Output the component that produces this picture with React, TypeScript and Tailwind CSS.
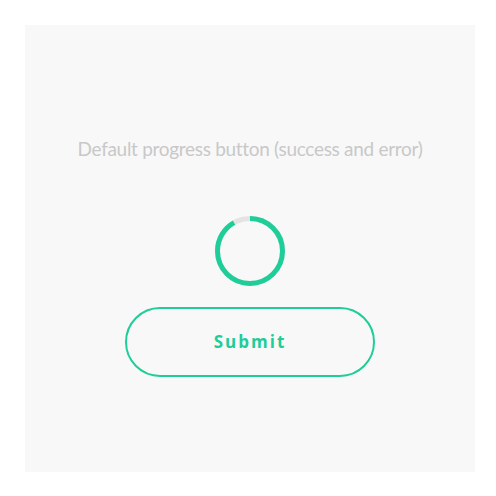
import React from 'react';

function Spinner() {
  // ring with a small grey gap just left of 12 o'clock
  const r = 32.5;
  const c = 2 * Math.PI * r;
  const gap = c * (30 / 360);
  return (
    <svg width="70" height="70" viewBox="0 0 70 70">
      <circle cx="35" cy="35" r={r} fill="none" stroke="#e3e3e3" strokeWidth="5" />
      <circle
        cx="35"
        cy="35"
        r={r}
        fill="none"
        stroke="#1ecd97"
        strokeWidth="5"
        strokeDasharray={`${c - gap} ${gap}`}
        transform="rotate(-90 35 35)"
      />
    </svg>
  );
}

export default function App() {
  return (
    <div className="w-[496px] h-[496px] bg-white pt-[25px] pl-[25px]">
      <div className="w-[450px] h-[447px] bg-[#f8f8f8] flex flex-col items-center pt-[112px]">
        <h2 className="text-[19px] leading-[24px] text-[#c8c8c8] font-['Lato','Liberation_Sans',sans-serif] tracking-[-0.3px]">
          Default progress button (success and error)
        </h2>
        <div className="mt-[55px]">
          <Spinner />
        </div>
        <button className="mt-[21px] w-[250px] h-[70px] rounded-full border-2 border-[#1ecd97] bg-transparent text-[#1ecd97] text-[17px] font-bold tracking-[2px] font-['Open_Sans','Liberation_Sans',sans-serif]">
          Submit
        </button>
      </div>
    </div>
  );
}
